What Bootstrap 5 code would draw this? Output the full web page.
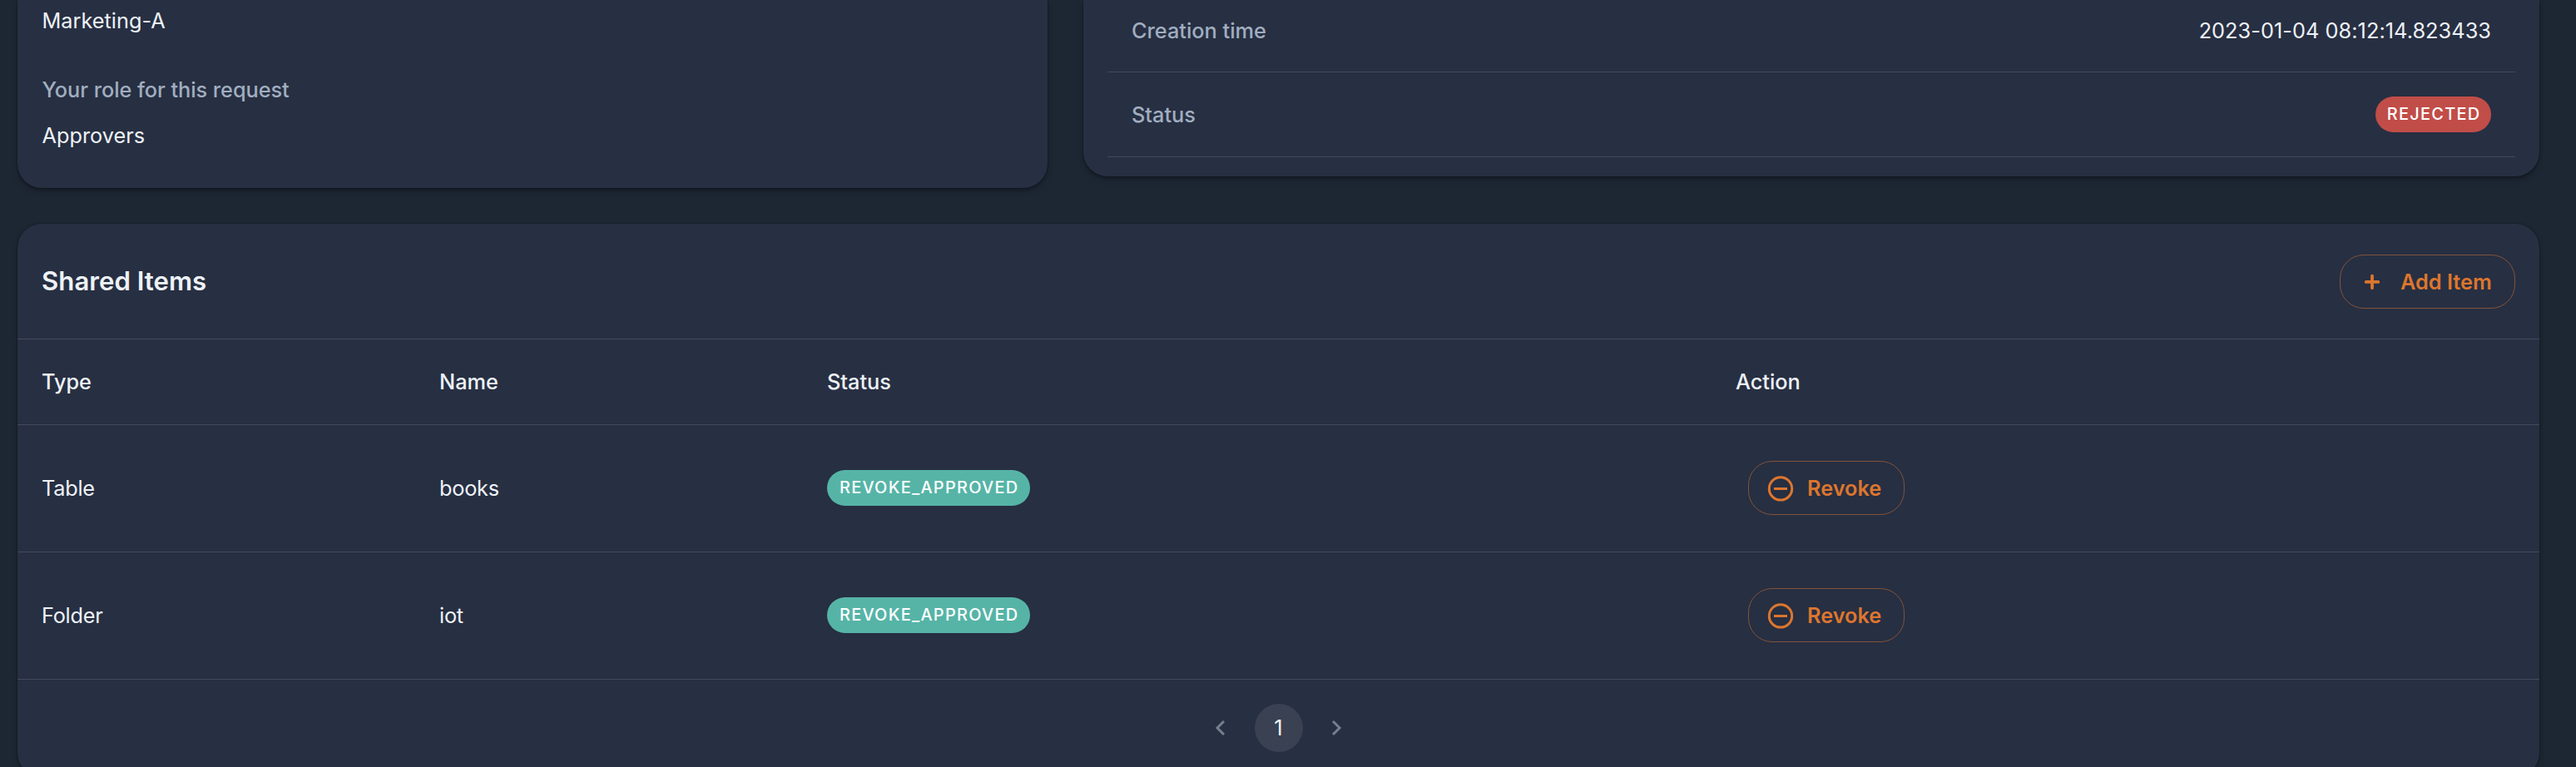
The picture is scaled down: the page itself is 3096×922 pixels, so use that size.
<!DOCTYPE html>
<html lang="en">
<head>
<meta charset="utf-8">
<title>Share request</title>
<link href="https://cdn.jsdelivr.net/npm/bootstrap@5.3.0/dist/css/bootstrap.min.css" rel="stylesheet">
<style>
  body { background: #1d2734; color: #edf2f7; font-family: Inter, "Liberation Sans", sans-serif; font-size: 25.3px; line-height: 38px; }
  .page { height: 922px; padding: 0 44px 0 21px; }
  .panel { background: #272f42; border-radius: 29px; box-shadow: 0 0 2px rgba(0,0,0,.5), 0 4px 7px -1px rgba(0,0,0,.38); }
  .panel-top { border-top-left-radius: 0; border-top-right-radius: 0; }
  .top-row { height: 226px; gap: 43px; margin-bottom: 43px; }
  .request-panel { width: 1238px; height: 226px; padding: 6px 29px 0 29.5px; }
  .role-label { margin-top: 45px; letter-spacing: -.05px; }
  .role-value { margin-top: 17px; }
  .details-panel { height: 212px; padding: 0 29px; }
  .detail-row { height: 102px; padding: 0 29px; border-bottom: 1px solid #444a5c; }
  .detail-row:first-child { height: 87px; padding-bottom: 12px; }
  .created-at { letter-spacing: .05px; }
  .muted { color: #a0aec0; font-weight: 500; }
  .chip { display: flex; align-items: center; justify-content: center; height: 43px; padding: 1px 0 0 1.3px; border-radius: 22px; color: #fff; font-size: 19.9px; font-weight: 500; letter-spacing: 1.3px; line-height: 1; }
  .chip-rejected { width: 139px; background: #c14d48; }
  .chip-approved { width: 244px; margin-bottom: 1px; background: #56b4a7; }
  .items-panel { height: 665px; }
  .items-head { height: 138px; padding: 1px 29px 0; }
  .items-head h2 { font-size: 31.2px; font-weight: 600; }
  .action-btn { display: flex; align-items: center; height: 65px; padding: 0; border: 1px solid #82533a; border-radius: 29px; color: #dd762e; font-size: 25.3px; font-weight: 600; }
  .add-btn { width: 211px; padding-left: 20px; gap: 16px; }
  .revoke-btn { width: 188px; margin: 0 0 1px 15px; padding-left: 20px; gap: 14px; }
  .items-table { table-layout: fixed; width: 100%; border-top: 1px solid #444a5c; border-collapse: separate; border-spacing: 0; }
  .items-table th, .items-table td { padding: 0 29px; border-bottom: 1px solid #444a5c; vertical-align: middle; }
  .items-table th { height: 103px; font-weight: 500; }
  .items-table td { height: 153px; letter-spacing: -.25px; }
  .items-table .chip { letter-spacing: 1.3px; }
  .items-table .action-btn { letter-spacing: 0; }
  .pager { height: 116px; gap: 22.5px; }
  .page-current { width: 58px; height: 58px; background: #394152; }
</style>
</head>
<body class="overflow-hidden">
<main class="page overflow-hidden">
  <div class="top-row d-flex align-items-start">
    <section class="panel panel-top request-panel flex-shrink-0">
      <div>Marketing-A</div>
      <div class="muted role-label">Your role for this request</div>
      <div class="role-value">Approvers</div>
    </section>
    <section class="panel panel-top details-panel flex-grow-1">
      <div class="detail-row d-flex align-items-center justify-content-between"><span class="muted">Creation time</span><span class="created-at">2023-01-04 08:12:14.823433</span></div>
      <div class="detail-row d-flex align-items-center justify-content-between"><span class="muted">Status</span><span class="chip chip-rejected">REJECTED</span></div>
    </section>
  </div>
  <section class="panel items-panel">
    <div class="items-head d-flex align-items-center justify-content-between">
      <h2 class="mb-0">Shared Items</h2>
      <button class="btn action-btn add-btn"><svg width="36" height="36" viewBox="0 0 36 36" fill="none" stroke="currentColor" stroke-width="3.8" stroke-linecap="round"><path d="M18 10.6v14.6M10.7 17.9h14.6"/></svg><span>Add Item</span></button>
    </div>
    <table class="items-table">
      <colgroup><col style="width:478px"><col style="width:466px"><col style="width:1092px"><col></colgroup>
      <thead><tr><th>Type</th><th>Name</th><th>Status</th><th>Action</th></tr></thead>
      <tbody>
        <tr><td>Table</td><td>books</td><td><span class="chip chip-approved">REVOKE_APPROVED</span></td>
          <td><button class="btn action-btn revoke-btn"><svg width="36" height="36" viewBox="0 0 36 36" fill="none" stroke="currentColor" stroke-width="3"><circle cx="18" cy="18.4" r="13.7"/><path d="M10 18.5h16"/></svg><span>Revoke</span></button></td></tr>
        <tr><td>Folder</td><td>iot</td><td><span class="chip chip-approved">REVOKE_APPROVED</span></td>
          <td><button class="btn action-btn revoke-btn"><svg width="36" height="36" viewBox="0 0 36 36" fill="none" stroke="currentColor" stroke-width="3"><circle cx="18" cy="18.4" r="13.7"/><path d="M10 18.5h16"/></svg><span>Revoke</span></button></td></tr>
      </tbody>
    </table>
    <nav class="pager d-flex align-items-center justify-content-center" aria-label="Pages">
      <svg width="36" height="36" viewBox="0 0 36 36" fill="none" stroke="#75808d" stroke-width="3"><path d="M22 10l-8 8 8 8"/></svg>
      <span class="page-current rounded-circle d-flex align-items-center justify-content-center">1</span>
      <svg width="36" height="36" viewBox="0 0 36 36" fill="none" stroke="#75808d" stroke-width="3"><path d="M14 10l8 8-8 8"/></svg>
    </nav>
  </section>
</main>
<script src="https://cdn.jsdelivr.net/npm/bootstrap@5.3.0/dist/js/bootstrap.bundle.min.js"></script>
</body>
</html>
